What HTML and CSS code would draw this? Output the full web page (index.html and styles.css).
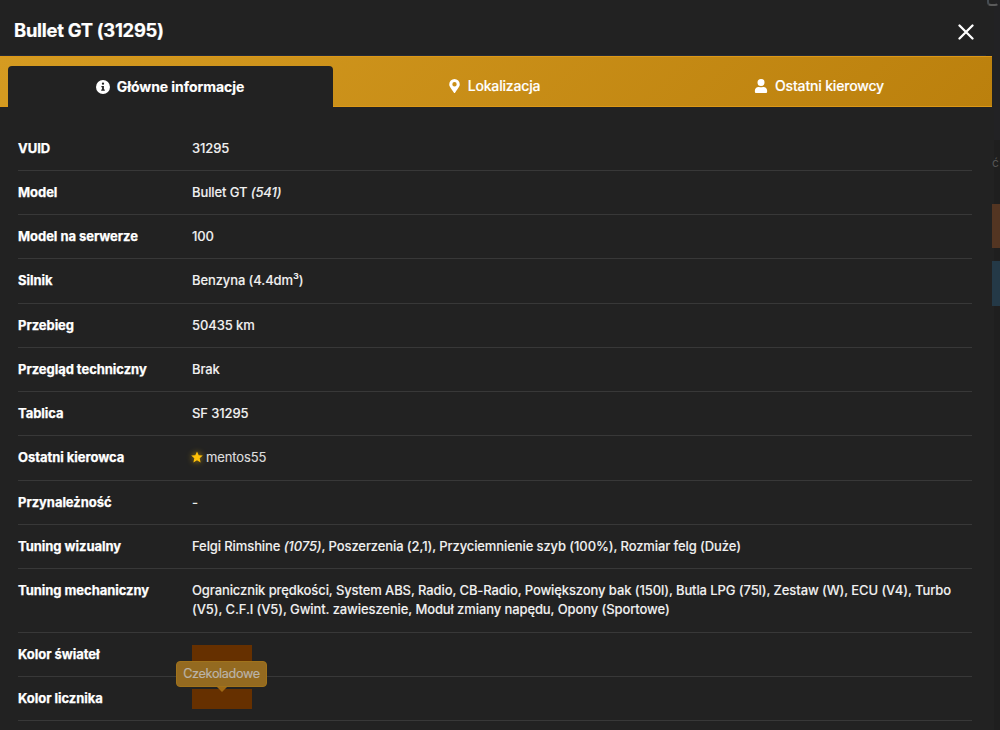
FILE: index.html
```
<!DOCTYPE html>
<html lang="pl">
<head>
<meta charset="utf-8">
<title>Bullet GT (31295)</title>
<link rel="stylesheet" href="styles.css">
</head>
<body>
<div class="backdrop">
  <span class="back-mark"></span>
  <span class="back-letter">ć</span>
  <span class="back-button back-orange"></span>
  <span class="back-button back-blue"></span>
</div>
<main class="modal">
  <header class="header">
    <h1 class="title"><span>Bullet GT (31295)</span></h1>
    <svg class="close" viewBox="0 0 16 16"><path d="M1.5 1.5 14.5 14.5M14.5 1.5 1.5 14.5"/></svg>
  </header>
  <nav class="tabs">
    <div class="tab tab-active">
      <svg class="icon-info" viewBox="0 0 14 14"><circle cx="7" cy="7" r="7" fill="#fff"/><circle cx="7" cy="3.7" r="1.15" fill="#222"/><path d="M5.4 6h2.5v3.5h.9v1.2H5.2V9.5h.9V7.200h-.7z" fill="#222"/></svg>
      <span>Główne informacje</span>
    </div>
    <div class="tab tab-location">
      <svg class="icon-pin" viewBox="0 0 384 512"><path fill="#fff" d="M172 502C27 291 0 270 0 192a192 192 0 0 1 384 0c0 78-27 99-172 310a24 24 0 0 1-40 0zm20-230a80 80 0 1 0 0-160 80 80 0 0 0 0 160z"/></svg>
      <span>Lokalizacja</span>
    </div>
    <div class="tab tab-drivers">
      <svg class="icon-user" viewBox="0 0 448 512"><path fill="#fff" d="M224 256a128 128 0 1 0 0-256 128 128 0 0 0 0 256zm90 32h-17a174 174 0 0 1-146 0h-17C60 288 0 348 0 422v42c0 27 21 48 48 48h352c27 0 48-21 48-48v-42c0-74-60-134-134-134z"/></svg>
      <span>Ostatni kierowcy</span>
    </div>
  </nav>
  <dl class="details">
    <div class="row"><dt>VUID</dt><dd>31295</dd></div>
    <div class="row"><dt>Model</dt><dd>Bullet GT <em>(541)</em></dd></div>
    <div class="row"><dt>Model na serwerze</dt><dd>100</dd></div>
    <div class="row"><dt>Silnik</dt><dd>Benzyna (4.4dm³)</dd></div>
    <div class="row"><dt>Przebieg</dt><dd>50435 km</dd></div>
    <div class="row"><dt>Przegląd techniczny</dt><dd>Brak</dd></div>
    <div class="row"><dt>Tablica</dt><dd>SF 31295</dd></div>
    <div class="row"><dt>Ostatni kierowca</dt><dd class="driver"><svg class="star" viewBox="0 0 24 24"><path d="m12 .8 3.400 7.600 8.200.8-6.200 5.500 1.800 8.300-7.200-4.300L4.800 23l1.800-8.300L.4 9.200l8.200-.8z"/></svg><span>mentos55</span></dd></div>
    <div class="row"><dt>Przynależność</dt><dd>-</dd></div>
    <div class="row"><dt>Tuning wizualny</dt><dd>Felgi Rimshine <em>(1075)</em>, Poszerzenia (2,1), Przyciemnienie szyb (100%), Rozmiar felg (Duże)</dd></div>
    <div class="row row-tall"><dt>Tuning mechaniczny</dt><dd>Ogranicznik prędkości, System ABS, Radio, CB-Radio, Powiększony bak (150l), Butla LPG (75l), Zestaw (W), ECU (V4), Turbo<br>(V5), C.F.I (V5), Gwint. zawieszenie, Moduł zmiany napędu, Opony (Sportowe)</dd></div>
    <div class="row"><dt>Kolor świateł</dt><dd><div class="swatch"></div></dd></div>
    <div class="row"><dt>Kolor licznika</dt><dd><div class="swatch"><div class="tooltip"><span>Czekoladowe</span></div></div></dd></div>
  </dl>
</main>
</body>
</html>
```
FILE: styles.css
```
* { box-sizing: border-box; }
body {
  margin: 0;
  height: 730px;
  overflow: hidden;
  position: relative;
  background: #1f1f1f;
  color: #fff;
  font-family: Inter, "Liberation Sans", sans-serif;
}
.modal { width: 992px; height: 730px; background: #222; }
.backdrop { position: absolute; top: 0; right: 0; width: 14px; height: 730px; overflow: hidden; background: linear-gradient(90deg, #222 8px, transparent 8px), linear-gradient(#222224 0 140px, #1f1f1f 140px); background-size: 8px 100%, 100% 100%; background-repeat: no-repeat; }
.back-mark { position: absolute; left: 1px; top: -5px; width: 12px; height: 11px; border: 2px solid transparent; border-bottom-color: #5b5b5b; border-left-color: #454c52; border-radius: 4px; }
.back-letter { position: absolute; left: 6px; top: 155px; font-size: 12px; line-height: 16px; color: #555; }
.back-button { position: absolute; left: 6px; width: 8px; }
.back-orange { top: 204px; height: 44px; background: #533522; }
.back-blue { top: 261px; height: 45px; background: #243947; }
.header { height: 56px; padding: 0 18px 0 14px; display: flex; justify-content: space-between; align-items: flex-start; border-bottom: 1px solid #262b36; }
.title { margin: 18px 0 0; font-size: 18.4px; line-height: 24px; font-weight: 700; letter-spacing: -0.28px; -webkit-text-stroke: 0.2px #fff; }
.close { width: 16px; height: 16px; margin-top: 24px; fill: none; stroke: #fff; stroke-width: 2.3; stroke-linecap: round; }
.tabs { position: relative; z-index: 1; height: 51px; padding: 9px 8px 0; display: grid; grid-template-columns: 325px 325px 326px; background: linear-gradient(135deg, #d59b21, #bb800d); border-top: 1px solid #dc9818; border-bottom: 1px solid #dc9818; }
.tab { height: 40px; display: flex; align-items: center; justify-content: center; font-size: 14px; font-weight: 500; line-height: 20px; letter-spacing: -0.17px; color: #fff; }
.tab span { -webkit-text-stroke: 0.15px #fff; }
.tab-location { padding-right: 2px; }
.tab-drivers { padding-right: 4px; }
.tab-active { height: 42px; padding: 0 1px 1px 0; background: #222; border-radius: 4px 4px 0 0; font-weight: 700; letter-spacing: -0.06px; }
.icon-info { width: 14px; height: 14px; margin-right: 7px; }
.icon-pin { width: 11px; height: 14px; margin-right: 8px; }
.icon-user { width: 14px; height: 14px; margin-right: 7px; }
.details { margin: 19px 20px 0 18px; font-size: 13px; line-height: 19px; }
.row { height: 44.25px; padding-top: 12.15px; display: grid; grid-template-columns: 174px 1fr; border-bottom: 1px solid #383838; }
.row:first-child { height: 44.8px; padding-top: 13px; }
.row-tall { height: 63.9px; }
dt { font-weight: 700; letter-spacing: -0.04px; white-space: nowrap; -webkit-text-stroke: 0.25px #fff; }
dd { margin: 0; color: #f0f0f0; font-weight: 500; letter-spacing: -0.1px; white-space: nowrap; -webkit-text-stroke: 0.1px #f0f0f0; }
.driver { display: flex; font-weight: 400; letter-spacing: -0.12px; color: #ddd; }
.star { width: 12px; height: 12px; margin: 3px 3px 0 -1px; fill: #ffc107; overflow: visible; filter: drop-shadow(0 0 3px #ffc107aa); }
.swatch { width: 60px; height: 20px; background: #663000; position: relative; }
.tooltip { position: absolute; left: -16px; top: -28px; width: 91px; height: 26px; display: flex; align-items: center; justify-content: center; border-radius: 4px; background: #946a20; border: 1px solid #a1731b; color: #bab3a8; font-size: 12.6px; line-height: 18px; font-weight: 400; letter-spacing: -0.32px; -webkit-text-stroke: 0.2px #bab3a8; }
.tooltip::after { content: ""; position: absolute; left: 40px; top: 25px; border: 5px solid transparent; border-top-color: #a06a15; border-bottom: 0; }
```
